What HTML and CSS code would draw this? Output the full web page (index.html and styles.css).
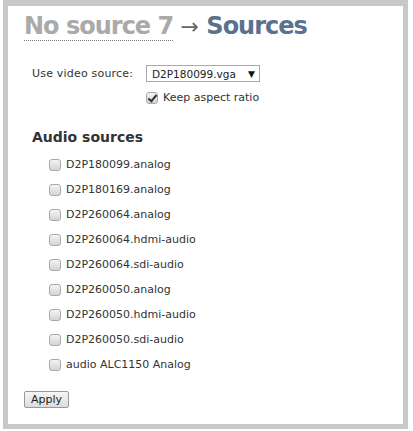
FILE: index.html
```html
<!DOCTYPE html>
<html lang="en">
<head>
    <meta charset="UTF-8">
    <title>Sources</title>
    <link rel="stylesheet" href="styles.css">
</head>
<body>
    <!-- Panel -->
    <div class="panel">
        <h1 class="title">
            <a href="#" class="crumb">No source 7</a>
            <span class="arrow">&rarr;</span>
            <span class="current">Sources</span>
        </h1>

        <!-- Video source -->
        <div class="video-row">
            <label class="field-label" for="video-source">Use video source:</label>
            <div class="select">
                <span>D2P180099.vga</span>
                <span class="caret">&#9660;</span>
            </div>
        </div>
        <label class="aspect">
            <input type="checkbox" checked>
            <span>Keep aspect ratio</span>
        </label>

        <!-- Audio sources -->
        <h3 class="section">Audio sources</h3>
        <ul class="audio-list">
            <li><label><input type="checkbox"> D2P180099.analog</label></li>
            <li><label><input type="checkbox"> D2P180169.analog</label></li>
            <li><label><input type="checkbox"> D2P260064.analog</label></li>
            <li><label><input type="checkbox"> D2P260064.hdmi-audio</label></li>
            <li><label><input type="checkbox"> D2P260064.sdi-audio</label></li>
            <li><label><input type="checkbox"> D2P260050.analog</label></li>
            <li><label><input type="checkbox"> D2P260050.hdmi-audio</label></li>
            <li><label><input type="checkbox"> D2P260050.sdi-audio</label></li>
            <li><label><input type="checkbox"> audio ALC1150 Analog</label></li>
        </ul>

        <button class="apply-btn">Apply</button>
    </div>
</body>
</html>
```
FILE: styles.css
```css
/* Basic Reset */
body, h1, h3, ul {
    margin: 0;
    padding: 0;
}

body {
    font-family: "DejaVu Sans", Verdana, sans-serif;
    font-size: 11px;
    color: #333;
    background-color: #fff;
}

/* Panel */
.panel {
    margin: 0 5px 0 3px;
    height: 418px;
    border: 5px solid #c8c8c8;
    border-top-width: 6px;
    background-color: #fff;
}

.title {
    font-size: 24px;
    font-weight: bold;
    line-height: 28px;
    padding: 6px 0 0 16px;
    white-space: nowrap;
    letter-spacing: -1px;
}

.crumb {
    color: #aaa;
    text-decoration: none;
    border-bottom: 1px dotted #777;
    padding-bottom: 0;
}

.arrow {
    color: #666;
    font-weight: normal;
    font-size: 22px;
    letter-spacing: 0;
}

.current {
    color: #5b7190;
}

/* Video source */
.video-row {
    display: flex;
    align-items: center;
    margin: 24px 0 0 24px;
}

.field-label {
    width: 114px;
    letter-spacing: 0.2px;
}

.select {
    width: 103px;
    height: 15px;
    border: 1px solid #aaa;
    padding: 0 4px 0 5px;
    display: flex;
    justify-content: space-between;
    align-items: center;
    color: #222;
    font-size: 10.5px;
}

.caret {
    font-size: 9px;
    color: #111;
}

.aspect {
    display: flex;
    align-items: center;
    margin: 9px 0 0 138px;
}

/* Checkboxes */
input[type="checkbox"] {
    appearance: none;
    width: 12px;
    height: 12px;
    margin: 0 5px 0 0;
    border: 1px solid #a9a9a9;
    border-radius: 3px;
    background: linear-gradient(#f4f4f4, #d4d4d4);
    position: relative;
    flex-shrink: 0;
}

input[type="checkbox"]:checked::after {
    content: "";
    position: absolute;
    left: 3px;
    top: 0;
    width: 3px;
    height: 7px;
    border: solid #333;
    border-width: 0 2px 2px 0;
    transform: rotate(40deg);
}

/* Audio sources */
.section {
    font-size: 14px;
    font-weight: bold;
    color: #333;
    margin: 25px 0 0 24px;
}

.audio-list {
    list-style: none;
    margin: 7px 0 0 41px;
}

.audio-list li {
    height: 25px;
    display: flex;
    align-items: center;
}

.audio-list label {
    display: flex;
    align-items: center;
}

/* Apply Button */
.apply-btn {
    margin: 14px 0 0 16px;
    font-family: "DejaVu Sans", Verdana, sans-serif;
    font-size: 11px;
    color: #222;
    padding: 1px 6px;
    height: 17px;
    border: 1px solid #999;
    border-radius: 2px;
    background: linear-gradient(#f6f6f6, #dcdcdc);
}
```
